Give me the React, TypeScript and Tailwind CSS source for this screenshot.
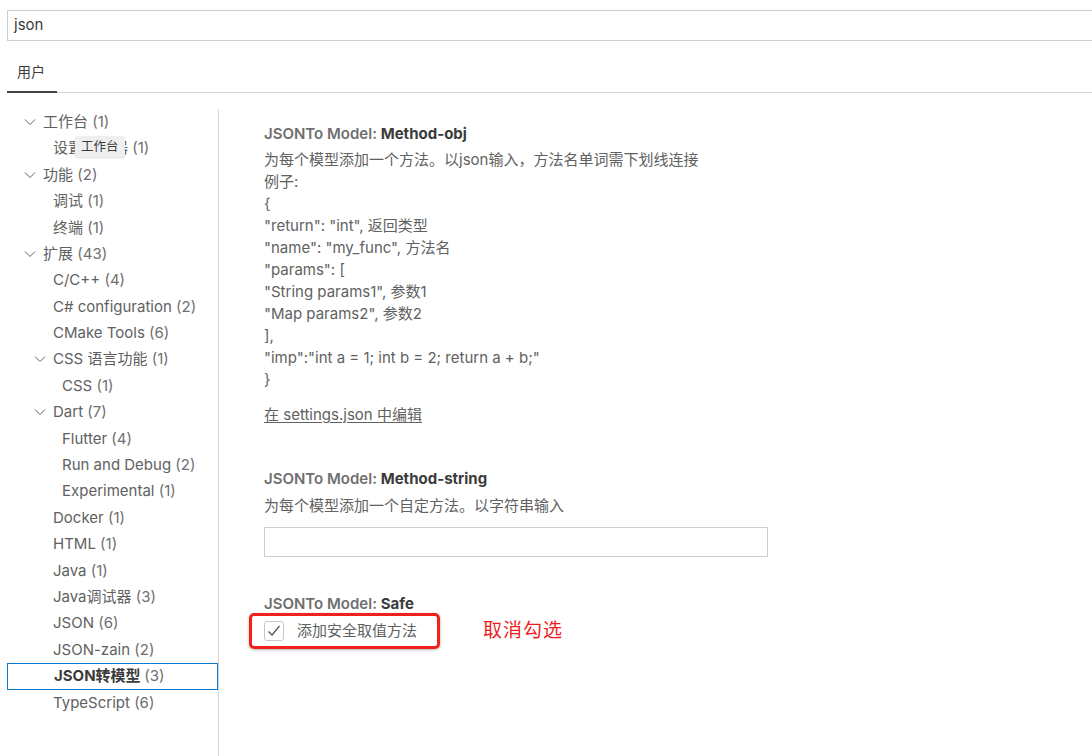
import React from 'react';

interface TreeItem { label: string; count: number; depth: 0 | 1 | 2; chevron?: boolean; selected?: boolean }

const TREE: TreeItem[] = [
  { label: '工作台', count: 1, depth: 0, chevron: true },
  { label: '设置编辑器', count: 1, depth: 1 },
  { label: '功能', count: 2, depth: 0, chevron: true },
  { label: '调试', count: 1, depth: 1 },
  { label: '终端', count: 1, depth: 1 },
  { label: '扩展', count: 43, depth: 0, chevron: true },
  { label: 'C/C++', count: 4, depth: 1 },
  { label: 'C# configuration', count: 2, depth: 1 },
  { label: 'CMake Tools', count: 6, depth: 1 },
  { label: 'CSS 语言功能', count: 1, depth: 1, chevron: true },
  { label: 'CSS', count: 1, depth: 2 },
  { label: 'Dart', count: 7, depth: 1, chevron: true },
  { label: 'Flutter', count: 4, depth: 2 },
  { label: 'Run and Debug', count: 2, depth: 2 },
  { label: 'Experimental', count: 1, depth: 2 },
  { label: 'Docker', count: 1, depth: 1 },
  { label: 'HTML', count: 1, depth: 1 },
  { label: 'Java', count: 1, depth: 1 },
  { label: 'Java调试器', count: 3, depth: 1 },
  { label: 'JSON', count: 6, depth: 1 },
  { label: 'JSON-zain', count: 2, depth: 1 },
  { label: 'JSON转模型', count: 3, depth: 1, selected: true },
  { label: 'TypeScript', count: 6, depth: 1 },
];

const PAD = ['pl-[36px]', 'pl-[46px]', 'pl-[55px]'];

const EXAMPLE = [
  '为每个模型添加一个方法。以json输入，方法名单词需下划线连接',
  '例子:',
  '{',
  '"return": "int", 返回类型',
  '"name": "my_func", 方法名',
  '"params": [',
  '"String params1", 参数1',
  '"Map params2", 参数2',
  '],',
  '"imp":"int a = 1; int b = 2; return a + b;"',
  '}',
];

function Chevron() {
  return (
    <svg width="12" height="12" viewBox="0 0 12 12" className="absolute -left-[19px] top-[5px]">
      <path d="M1 3.5 L6 8.5 L11 3.5" fill="none" stroke="#616161" strokeWidth="1" />
    </svg>
  );
}

function SettingTitle({ name }: { name: string }) {
  return (
    <div className="text-[15px] leading-[20px] font-semibold text-[#6f6f6f]">
      JSONTo Model: <span className="font-bold text-[#3b3b3b]">{name}</span>
    </div>
  );
}

export default function App() {
  return (
    <div
      className="w-[1092px] h-[756px] bg-white overflow-hidden text-[#616161]"
      style={{ fontFamily: 'Inter, "Noto Sans CJK SC", sans-serif' }}
    >
      {/* Search */}
      <div className="pt-[10px] pl-[7px]">
        <div className="h-[31px] border border-r-0 border-[#cecece] flex items-center pl-[6px] text-[15px] text-[#3b3b3b]">
          json
        </div>
      </div>

      {/* Tabs */}
      <div className="ml-[7px] mt-[18px] border-b border-[#d4d4d4] flex">
        <div className="w-[50px] pl-[10px] h-[34px] text-[14px] leading-[26px] text-[#3b3b3b] border-b-2 border-[#424242] -mb-[1px]">
          用户
        </div>
      </div>

      <div className="flex mt-[16px] h-[650px]">
        {/* Tree */}
        <div className="w-[219px] pl-[7px] border-r border-[#d7d7d7] relative">
          {TREE.map(item => (
            <div
              key={item.label}
              className={`h-[26.4px] flex items-center text-[15px] ${PAD[item.depth]} ${
                item.selected ? 'border border-[#0b7ad1] font-bold text-[#3b3b3b]' : ''
              }`}
            >
              <span className="relative whitespace-nowrap">
                {item.chevron && <Chevron />}
                {item.label} <span className="font-normal text-[#6f6f6f]">({item.count})</span>
              </span>
            </div>
          ))}
          {/* tooltip */}
          <div className="absolute left-[75px] top-[27px] h-[21px] px-[6px] bg-[#efefef] rounded-[3px] shadow-[0_1px_2px_rgba(0,0,0,0.15)] text-[12.5px] leading-[21px] text-[#3b3b3b]">
            工作台
          </div>
        </div>

        {/* Content */}
        <div className="flex-1 pl-[45px] pt-[15px]">
          <SettingTitle name="Method-obj" />
          <div className="mt-[5px] text-[15px] leading-[22px]">
            {EXAMPLE.map((l, i) => <div key={i} className="whitespace-pre">{l}</div>)}
          </div>
          <div className="mt-[14px] text-[15px] leading-[20px] underline underline-offset-2">在 settings.json 中编辑</div>

          <div className="mt-[44px]">
            <SettingTitle name="Method-string" />
            <div className="mt-[6px] text-[15px] leading-[22px]">为每个模型添加一个自定方法。以字符串输入</div>
            <div className="mt-[10px] w-[504px] h-[30px] border border-[#cecece]" />
          </div>

          <div className="mt-[37px]">
            <SettingTitle name="Safe" />
            <div className="flex items-center -mt-[1px]">
              <div className="-ml-[15px] h-[36px] w-[191px] border-[3px] border-[#f0201c] rounded-[5px] shadow-[0_1px_3px_rgba(0,0,0,0.3)] flex items-center pl-[12px]">
                <div className="w-[20px] h-[20px] border border-[#c8c8c8] rounded-[3px] flex items-center justify-center">
                  <svg width="16" height="16" viewBox="0 0 16 16">
                    <path d="M2.5 8.5 L6 12 L13.5 3" fill="none" stroke="#505050" strokeWidth="1.2" />
                  </svg>
                </div>
                <span className="ml-[13px] text-[15px] text-[#616161]">添加安全取值方法</span>
              </div>
              <span className="ml-[43px] text-[19px] text-[#ee1d1d] tracking-[1px]">取消勾选</span>
            </div>
          </div>
        </div>
      </div>
    </div>
  );
}
